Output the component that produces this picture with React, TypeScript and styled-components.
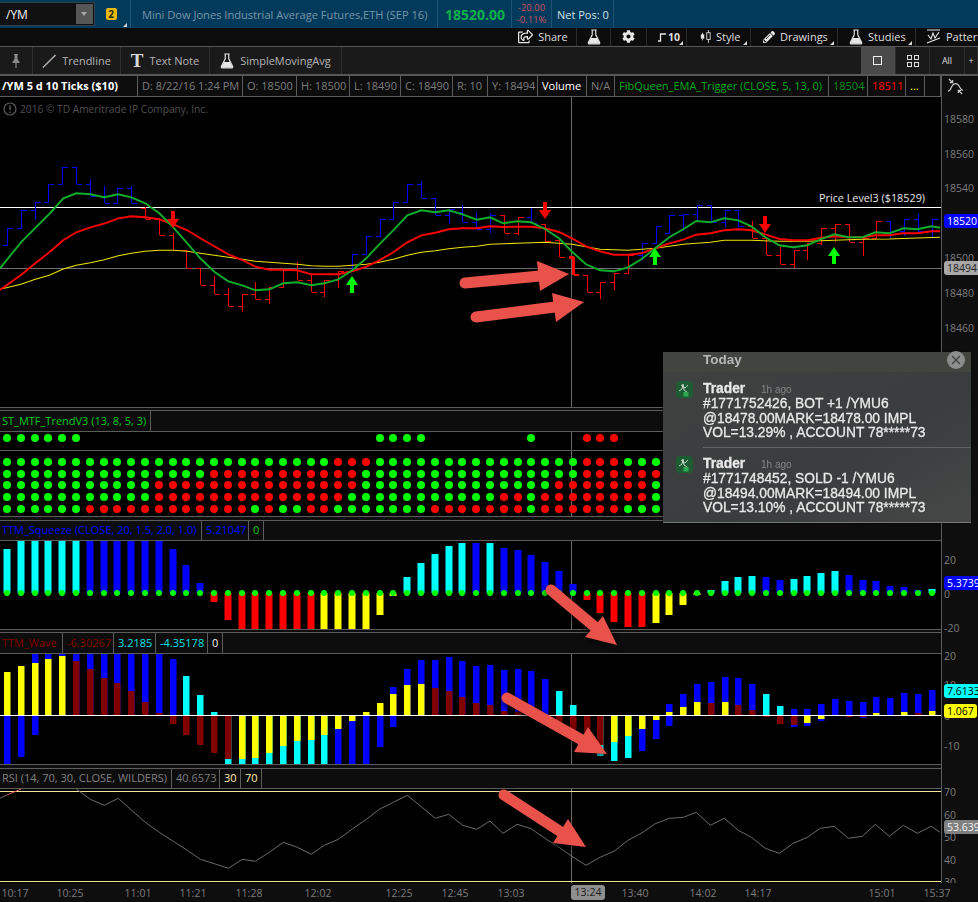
import styled, { createGlobalStyle } from "styled-components"
import { FaCog, FaPencilAlt, FaRegShareSquare } from "react-icons/fa"

const GlobalStyle = createGlobalStyle`
  html, body {
    margin: 0;
    padding: 0;
    background: #0e0e0e;
  }
  * {
    box-sizing: border-box;
  }
`

const BLUE = "#0000ff"
const CYAN = "#00ffff"
const RED = "#ff0000"
const YELLOW = "#ffff00"
const MAROON = "#800000"
const LIME = "#00ff00"

// bar n sits at this x
const barX = (n: number) => Math.round(7 + 13.8 * n)
const CROSS_X = 571

// price data was read off a 3x crop, so y here is (pageY - 125) * 3
const py = (v: number) => 125 + v / 3

type PriceBar = [number, number, number, number, "b" | "r"]
const priceBars: PriceBar[] = [
  [310, 361, 361, 310, "b"], [256, 310, 310, 256, "b"], [232, 285, 256, 232, "b"], [178, 232, 232, 178, "b"],
  [127, 178, 178, 127, "b"], [127, 178, 127, 178, "b"], [162, 214, 178, 214, "b"], [184, 235, 214, 235, "b"],
  [190, 235, 235, 190, "b"], [184, 235, 190, 235, "b"], [245, 283, 250, 283, "r"], [280, 331, 283, 331, "r"],
  [325, 376, 331, 376, "r"], [376, 430, 376, 430, "r"], [430, 481, 430, 481, "r"], [454, 508, 481, 508, "r"],
  [490, 544, 508, 544, "r"], [508, 560, 544, 508, "r"], [472, 523, 508, 523, "r"], [487, 538, 523, 487, "r"],
  [436, 487, 487, 436, "r"], [412, 466, 436, 466, "r"], [451, 502, 466, 502, "r"], [466, 517, 502, 466, "r"],
  [438, 490, 466, 438, "r"], [387, 438, 438, 387, "b"], [334, 387, 387, 334, "b"], [283, 334, 334, 283, "b"],
  [232, 283, 283, 232, "b"], [178, 232, 232, 178, "b"], [169, 220, 178, 220, "b"], [220, 271, 220, 271, "b"],
  [252, 298, 271, 252, "b"], [241, 292, 262, 292, "b"], [262, 313, 292, 313, "b"], [265, 325, 313, 270, "b"],
  [270, 325, 270, 325, "r"], [277, 331, 325, 277, "r"], [250, 295, 277, 295, "b"], [298, 350, 298, 350, "r"],
  [347, 397, 347, 397, "r"], [397, 450, 397, 450, "r"], [450, 502, 450, 502, "r"], [472, 523, 502, 472, "r"],
  [445, 496, 472, 445, "r"], [390, 445, 445, 390, "r"], [355, 406, 390, 355, "b"], [304, 355, 355, 304, "b"],
  [271, 325, 325, 271, "b"], [268, 319, 271, 268, "b"], [241, 292, 268, 241, "b"], [241, 292, 241, 292, "b"],
  [256, 307, 292, 256, "b"], [256, 307, 256, 304, "b"], [289, 340, 304, 340, "r"], [340, 391, 340, 391, "r"],
  [367, 418, 391, 418, "r"], [376, 430, 418, 376, "r"], [355, 406, 376, 355, "r"], [310, 361, 355, 310, "r"],
  [298, 352, 310, 298, "r"], [298, 352, 298, 352, "r"], [340, 393, 352, 340, "r"], [289, 343, 340, 289, "r"],
  [289, 340, 289, 320, "b"], [283, 334, 320, 283, "b"], [268, 322, 283, 318, "b"], [283, 335, 318, 283, "b"],
]

type Pt = [number, number]
// right half of each line was read from the second crop, which starts at 1470
const joinLine = (left: Pt[], right: Pt[]) =>
  [...left, ...right.map(([x, y]) => [x + 1470, y] as Pt)]
    .map(([x, y]) => `${(x / 3).toFixed(1)},${py(y).toFixed(1)}`)
    .join(" ")

const greenLine = joinLine(
  [[0, 430], [63, 352], [148, 267], [190, 220], [229, 205], [271, 208], [313, 217], [355, 208], [394, 217], [436, 235], [478, 265], [520, 307], [562, 355], [601, 400], [643, 440], [685, 469], [727, 481], [766, 496], [808, 493], [850, 475], [892, 472], [934, 481], [973, 475], [1015, 463], [1057, 436], [1099, 400], [1138, 358], [1180, 316], [1222, 271], [1264, 256], [1306, 262], [1346, 256], [1388, 268], [1430, 284]],
  [[0, 277], [39, 295], [81, 289], [123, 292], [165, 312], [207, 340], [246, 380], [288, 418], [330, 436], [372, 439], [414, 427], [454, 403], [496, 370], [538, 337], [580, 313], [619, 288], [661, 292], [703, 280], [745, 286], [784, 304], [826, 337], [868, 361], [910, 367], [952, 361], [991, 343], [1033, 328], [1075, 337], [1117, 337], [1156, 322], [1198, 325], [1240, 310], [1282, 313], [1324, 304], [1350, 308]],
)
const redLine = joinLine(
  [[0, 495], [63, 450], [106, 415], [148, 382], [190, 346], [229, 322], [271, 307], [313, 296], [355, 280], [394, 274], [436, 277], [478, 283], [520, 298], [562, 316], [601, 340], [643, 364], [685, 388], [727, 405], [766, 425], [808, 434], [850, 434], [892, 436], [934, 448], [973, 448], [1015, 448], [1057, 439], [1099, 425], [1138, 406], [1180, 382], [1222, 352], [1264, 331], [1306, 323], [1346, 313], [1388, 310], [1430, 310]],
  [[0, 304], [39, 306], [81, 305], [123, 305], [165, 310], [207, 321], [246, 340], [288, 364], [330, 379], [372, 389], [414, 389], [454, 385], [496, 370], [538, 355], [580, 344], [619, 329], [661, 325], [703, 316], [745, 313], [784, 316], [826, 328], [868, 342], [910, 346], [952, 346], [991, 339], [1033, 334], [1075, 337], [1117, 337], [1156, 331], [1198, 331], [1240, 325], [1282, 325], [1324, 319], [1350, 319]],
)
const yellowLine = joinLine(
  [[0, 493], [63, 478], [106, 463], [148, 451], [190, 432], [229, 421], [271, 413], [313, 404], [355, 392], [394, 385], [436, 379], [478, 376], [520, 376], [562, 379], [601, 385], [643, 391], [685, 397], [727, 403], [766, 409], [808, 412], [850, 415], [892, 418], [934, 422], [973, 424], [1015, 424], [1057, 421], [1099, 418], [1138, 412], [1180, 403], [1222, 391], [1264, 382], [1306, 377], [1346, 371], [1388, 367], [1430, 364]],
  [[0, 358], [81, 355], [165, 352], [246, 358], [330, 373], [414, 376], [496, 370], [580, 358], [661, 352], [703, 346], [784, 346], [868, 349], [952, 349], [1033, 346], [1117, 343], [1198, 342], [1282, 339], [1350, 337]],
)

const signals = [
  { x: 173, y: 211, up: false },
  { x: 545, y: 202, up: false },
  { x: 765, y: 216, up: false },
  { x: 352, y: 276, up: true },
  { x: 655, y: 248, up: true },
  { x: 834, y: 247, up: true },
]

// trend dots: the ranges of bars that are red, per row
const trendTop: [number, number, string][] = [[0, 5, LIME], [27, 30, LIME], [38, 38, LIME], [42, 44, RED]]
const trendRows: { y: number; red: [number, number][] }[] = [
  { y: 462, red: [[24, 26], [42, 44]] },
  { y: 474, red: [[15, 25], [42, 47]] },
  { y: 485, red: [[11, 25], [40, 46]] },
  { y: 497, red: [[11, 24], [36, 37], [39, 46]] },
  { y: 509, red: [[6, 17], [19, 19], [22, 23], [31, 37], [39, 44]] },
]

const squeeze: [number, string][] = [
  [44, CYAN], [60, CYAN], [60, CYAN], [60, CYAN], [60, CYAN], [60, CYAN],
  [60, BLUE], [60, BLUE], [60, BLUE], [60, BLUE], [60, BLUE], [60, BLUE], [44, BLUE], [28, BLUE], [10, BLUE],
  [-9, RED], [-27, RED], [-40, RED], [-40, RED], [-40, RED], [-40, RED], [-40, RED], [-40, RED],
  [-40, YELLOW], [-40, YELLOW], [-40, YELLOW], [-40, YELLOW], [-22, YELLOW], [-3, YELLOW],
  [16, CYAN], [30, CYAN], [39, CYAN], [47, CYAN], [50, CYAN], [50, BLUE], [50, CYAN],
  [45, BLUE], [43, BLUE], [38, BLUE], [31, BLUE], [22, BLUE], [9, BLUE],
  [-7, RED], [-20, RED], [-29, RED], [-34, RED], [-34, RED],
  [-30, YELLOW], [-22, YELLOW], [-12, YELLOW], [-2, YELLOW],
  [3, CYAN], [12, CYAN], [16, CYAN], [17, CYAN], [16, BLUE], [13, BLUE], [14, CYAN], [17, CYAN], [20, CYAN], [22, CYAN],
  [18, BLUE], [13, BLUE], [12, BLUE], [7, BLUE], [6, BLUE], [3, BLUE], [4, CYAN],
]

// wave: each bar is a list of [height, colour], painted in order, tallest first
const B = BLUE, Y = YELLOW, M = MAROON, C = CYAN
const wave: [number, string][][] = [
  [[43, Y], [-49, B]], [[49, Y], [-42, B]], [[62, B], [52, Y], [-20, B]], [[62, B], [56, Y]], [[62, B], [59, Y]],
  [[62, B], [54, M]], [[62, B], [46, M]], [[62, B], [37, M]], [[62, B], [32, M]], [[62, B], [24, M]], [[62, B], [13, M]], [[62, B], [2, M]],
  [[56, B], [-9, M]], [[39, C], [-20, M]], [[20, C], [-30, M]], [[3, C], [-38, M]],
  [[-49, C], [-44, M]], [[-49, C], [-44, Y]], [[-49, C], [-43, Y]], [[-49, C], [-38, Y]], [[-49, C], [-31, Y]], [[-49, C], [-26, Y]], [[-49, C], [-25, Y]], [[-49, C], [-20, Y]],
  [[-49, B], [-14, Y]], [[-49, B], [-6, Y]], [[3, Y], [-49, B]], [[12, Y], [-32, B]], [[28, B], [21, Y], [-12, B]],
  [[46, B], [30, Y]], [[55, B], [31, Y]], [[55, B], [27, M]], [[58, B], [24, M]], [[54, B], [18, M]], [[49, B], [12, M]], [[50, B], [10, M]],
  [[45, B], [4, M]], [[46, B], [3, M]], [[44, B]], [[36, B]], [[24, C], [-7, M]], [[10, C], [-18, M]], [[-25, M]],
  [[-41, C], [-30, M]], [[-46, C], [-27, Y]], [[-43, C], [-21, Y]], [[-36, B], [-14, Y]], [[-24, B], [-5, Y]],
  [[11, B], [3, Y], [-11, B]], [[21, B], [8, Y]], [[31, B], [13, Y]], [[33, B], [12, M]], [[38, B], [13, Y]], [[37, B], [10, M]], [[31, B], [5, M]],
  [[21, C], [-2, M]], [[9, C], [-9, M]], [[6, B], [-12, B], [-10, M]], [[6, B], [-11, B], [-8, Y]], [[11, B], [-6, B], [-4, Y]],
  [[16, B]], [[14, B], [-2, M]], [[13, B], [-3, B], [-2, M]], [[18, B], [2, Y]], [[17, B]], [[22, B], [3, Y]], [[21, B], [2, M]], [[25, B], [4, Y]],
]

const rsiPoints = (pts: Pt[]) => pts.map(([x, y]) => `${(x / 3).toFixed(1)},${(765 + y / 3).toFixed(1)}`).join(" ")
const rsiLine = rsiPoints([
  [229, 72], [271, 103], [313, 121], [355, 100], [394, 135], [436, 172], [478, 202], [520, 229], [562, 256], [601, 283], [643, 296], [685, 310], [727, 283], [766, 289], [808, 262], [850, 232], [892, 247], [934, 268], [973, 241], [1015, 223], [1057, 192], [1099, 163], [1138, 133], [1180, 112], [1222, 91], [1264, 125], [1306, 160], [1346, 148], [1388, 181], [1430, 193], [1470, 168],
  [1509, 205], [1551, 178], [1593, 191], [1635, 220], [1677, 247], [1716, 274], [1758, 301], [1800, 277], [1842, 259], [1884, 226], [1924, 205], [1966, 176], [2008, 160], [2050, 157], [2089, 142], [2131, 181], [2173, 160], [2215, 196], [2254, 217], [2296, 250], [2338, 265], [2380, 235], [2422, 217], [2461, 190], [2503, 184], [2545, 220], [2587, 214], [2626, 178], [2668, 214], [2710, 181], [2752, 205], [2794, 184], [2820, 202],
])

const callouts = [
  { tail: [465, 283], neck: [540, 276], head: "537,261 569,274 540,291" },
  { tail: [476, 317], neck: [555, 307], head: "552,293 584,302 556,322" },
  { tail: [551, 590], neck: [595, 627], head: "603,616 617,645 585,637" },
  { tail: [507, 698], neck: [582, 740], head: "588,727 607,754 574,752" },
  { tail: [504, 795], neck: [561, 832], head: "568,819 586,847 553,843" },
]

const timeLabels: [string, number][] = [
  ["10:17", 15], ["10:25", 70], ["11:01", 138], ["11:21", 193], ["11:28", 249], ["12:02", 318], ["12:25", 399],
  ["12:45", 455], ["13:03", 511], ["13:40", 635], ["14:02", 703], ["14:17", 758], ["15:01", 882], ["15:37", 937],
]

const axisTicks: [string, number][] = [
  ["18580", 119], ["18560", 154], ["18540", 188], ["18500", 258], ["18480", 293], ["18460", 328],
  ["20", 560], ["0", 594], ["-20", 628],
  ["20", 656], ["10", 685], ["0", 716], ["-10", 746],
  ["70", 792], ["60", 815], ["50", 837], ["40", 860], ["30", 882],
]

const axisBadges: { text: string; y: number; bg: string; fg: string }[] = [
  { text: "18520", y: 221, bg: BLUE, fg: "#ffffff" },
  { text: "18494", y: 268, bg: "#a8a8a8", fg: "#222222" },
  { text: "5.3739", y: 583, bg: BLUE, fg: "#ffffff" },
  { text: "7.6133", y: 691, bg: CYAN, fg: "#000000" },
  { text: "1.067", y: 711, bg: YELLOW, fg: "#000000" },
  { text: "53.639", y: 827, bg: "#808080", fg: "#f2f2f2" },
]

const Flask = ({ size = 16 }: { size?: number }) => (
  <svg width={size} height={size + 2} viewBox="0 0 16 18">
    <path d="M5 1h6M6 1.500v5L1.600 15c-.5 1 .1 2 1.100 2h10.600c1 0 1.600-1 1.100-2L10 6.500v-5" fill="none" stroke="#e6e6e6" strokeWidth="1.300" />
    <path d="M4.600 10h6.800l2.700 5.400c.3.700 0 1.200-.8 1.200H2.700c-.8 0-1.100-.5-.8-1.200z" fill="#e6e6e6" />
  </svg>
)

const Corner = styled.span`
  position: absolute;
  right: 3px;
  bottom: 1px;
  width: 0;
  height: 0;
  border-style: solid;
  border-width: 0 0 4px 4px;
  border-color: transparent transparent #d8d8d8 transparent;
`

export default function App() {
  return (
    <>
      <GlobalStyle />
      <Page>
        <TopBar>
          <SymbolBox>
            /YM
            <DropButton />
          </SymbolBox>
          <LinkCell>
            <LinkBadge>2</LinkBadge>
            <Corner />
          </LinkCell>
          <TitleCell>Mini Dow Jones Industrial Average Futures,ETH (SEP 16)</TitleCell>
          <LastCell>18520.00</LastCell>
          <ChangeCell>
            <span>-20.00</span>
            <span>-0.11%</span>
          </ChangeCell>
          <NetCell>Net Pos: 0</NetCell>
        </TopBar>

        <ActionBar>
          <ActionItem $w={67}>
            <FaRegShareSquare size={15} />
            Share
          </ActionItem>
          <ActionItem $w={34}>
            <Flask size={14} />
          </ActionItem>
          <ActionItem $w={36}>
            <FaCog size={13} />
          </ActionItem>
          <ActionItem $w={40} $pad={11}>
            <svg width="8" height="10" viewBox="0 0 8 10">
              <path d="M0 9h2.500V2H8" fill="none" stroke="#e6e6e6" strokeWidth="1.300" />
            </svg>
            <b>10</b>
            <Corner />
          </ActionItem>
          <ActionItem $w={64} $pad={13}>
            <svg width="11" height="15" viewBox="0 0 13 15">
              <path d="M3 3v9M10 0v15" stroke="#e6e6e6" strokeWidth="1" />
              <rect x="1" y="5" width="4" height="5" fill="#e6e6e6" />
              <rect x="8" y="3" width="4" height="8" fill="#111" stroke="#e6e6e6" />
            </svg>
            Style
            <Corner />
          </ActionItem>
          <ActionItem $w={87} $pad={12}>
            <FaPencilAlt size={12} />
            Drawings
            <Corner />
          </ActionItem>
          <ActionItem $w={78} $pad={11}>
            <Flask size={14} />
            Studies
            <Corner />
          </ActionItem>
          <ActionItem $w={80} $pad={10}>
            <svg width="15" height="16" viewBox="0 0 15 16">
              <path d="M1 1h13M2 6l3 4 2-6 2 5 4-6M1 14l13-5" fill="none" stroke="#e6e6e6" strokeWidth="1.100" />
            </svg>
            Patterns
          </ActionItem>
        </ActionBar>

        <Toolbar>
          <ToolItem $w={33}>
            <svg width="8" height="14" viewBox="0 0 8 14">
              <path d="M2 0h4v1l-.6.6V5L7.500 8v1H4.600v5H3.400V9H.5V8l2.100-3V1.600L2 1z" fill="#8a8a8a" />
            </svg>
          </ToolItem>
          <ToolItem $w={88}>
            <svg width="14" height="14" viewBox="0 0 15 15">
              <path d="M1 14.500L14.500 1" stroke="#b8b8b8" strokeWidth="1.400" />
            </svg>
            Trendline
          </ToolItem>
          <ToolItem $w={89}>
            <SerifT>T</SerifT>
            Text Note
          </ToolItem>
          <ToolItem $w={132}>
            <Flask size={14} />
            SimpleMovingAvg
          </ToolItem>
          <ToolSpacer />
          <ViewButton $w={35} $active>
            <svg width="10" height="10" viewBox="0 0 10 10">
              <rect x=".5" y=".5" width="8" height="8" fill="none" stroke="#f0f0f0" />
            </svg>
          </ViewButton>
          <ViewButton $w={34}>
            <svg width="12" height="12" viewBox="0 0 12 12" fill="none" stroke="#dcdcdc">
              <rect x=".5" y=".5" width="4" height="4" />
              <rect x="7.500" y=".5" width="4" height="4" />
              <rect x=".5" y="7.500" width="4" height="4" />
              <rect x="7.500" y="7.500" width="4" height="4" />
            </svg>
          </ViewButton>
          <ViewButton $w={35}>All</ViewButton>
          <ViewButton $w={13}>+</ViewButton>
        </Toolbar>

        <Workspace>
          <Charts>
            <Legend>
              <LegendCell $w={138} $color="#ffffff" $bold>/YM 5 d 10 Ticks ($10)</LegendCell>
              <LegendCell $w={105}>D: 8/22/16 1:24 PM</LegendCell>
              <LegendCell $w={54}>O: 18500</LegendCell>
              <LegendCell $w={53}>H: 18500</LegendCell>
              <LegendCell $w={51}>L: 18490</LegendCell>
              <LegendCell $w={52}>C: 18490</LegendCell>
              <LegendCell $w={35}>R: 10</LegendCell>
              <LegendCell $w={50}>Y: 18494</LegendCell>
              <LegendCell $w={49} $color="#ffffff">Volume</LegendCell>
              <LegendCell $w={28}>N/A</LegendCell>
              <LegendCell $w={214} $color="#00a81c">FibQueen_EMA_Trigger (CLOSE, 5, 13, 0)</LegendCell>
              <LegendCell $w={39} $color="#008f18">18504</LegendCell>
              <LegendCell $w={38} $color={RED}>18511</LegendCell>
              <LegendCell $w={19} $color={YELLOW}>...</LegendCell>
              <LegendCell $w={16} />
            </Legend>
            <Plot $h={310}>
              <Copyright>
                <svg width="14" height="14" viewBox="0 0 14 14">
                  <circle cx="7" cy="7" r="6" fill="none" stroke="#5a5a5a" strokeWidth="1.200" />
                  <path d="M7 3.500v4.500M7 9.500v1.500" stroke="#5a5a5a" strokeWidth="1.500" />
                </svg>
                2016 © TD Ameritrade IP Company, Inc.
              </Copyright>
              <PriceLevel>Price Level3 ($18529)</PriceLevel>
              <PlotSvg $top={97} $h={310}>
                <Crosshair top={97} h={310} />
                <line x1="0" x2="941" y1="207.500" y2="207.500" stroke="#ffffff" />
                <line x1="0" x2="941" y1="268.500" y2="268.500" stroke="#707070" />
                {priceBars.map(([top, bot, open, close, c], n) => {
                  const x = barX(n) + 0.5
                  return (
                    <path
                      key={n}
                      d={`M${x} ${py(top)}V${py(bot)}M${x - 5} ${py(open)}H${x}M${x} ${py(close)}H${x + 5}`}
                      fill="none"
                      stroke={c === "b" ? BLUE : RED}
                      strokeWidth={n === 41 ? 2.5 : 1}
                      shapeRendering="crispEdges"
                    />
                  )
                })}
                <polyline points={yellowLine} fill="none" stroke="#efe300" strokeWidth="1.100" />
                <polyline points={redLine} fill="none" stroke={RED} strokeWidth="1.900" />
                <polyline points={greenLine} fill="none" stroke="#0fae2d" strokeWidth="1.900" />
                {signals.map(({ x, y, up }) => (
                  <path
                    key={x}
                    d={
                      up
                        ? `M${x} ${y}l6 9h-4v8h-4v-8h-4z`
                        : `M${x - 2} ${y}h4v8h4l-6 9l-6-9h4z`
                    }
                    fill={up ? LIME : RED}
                  />
                ))}
              </PlotSvg>
            </Plot>

            <PaneGap $h={4} />
            <Legend>
              <LegendCell $w={151} $color="#00c81e">ST_MTF_TrendV3 (13, 8, 5, 3)</LegendCell>
            </Legend>
            <Plot $h={84}>
              <PlotSvg $top={432} $h={84}>
                <Crosshair top={432} h={84} />
                <line x1="0" x2="941" y1="450.500" y2="450.500" stroke="#5e5e5e" />
                {trendTop.map(([from, to, color]) =>
                  Array.from({ length: to - from + 1 }, (_, i) => (
                    <circle key={from + i} cx={barX(from + i)} cy={438} r={4} fill={color} />
                  )),
                )}
                {trendRows.map(({ y, red }) =>
                  Array.from({ length: 48 }, (_, n) => (
                    <circle
                      key={`${y}-${n}`}
                      cx={barX(n)}
                      cy={y}
                      r={4}
                      fill={red.some(([a, b]) => n >= a && n <= b) ? RED : LIME}
                    />
                  )),
                )}
              </PlotSvg>
            </Plot>

            <PaneGap $h={5} />
            <Legend $h={20}>
              <LegendCell $w={202} $color={BLUE}>TTM_Squeeze (CLOSE, 20, 1.5, 2.0, 1.0)</LegendCell>
              <LegendCell $w={47} $color={BLUE}>5.21047</LegendCell>
              <LegendCell $w={15} $color="#00c81e">0</LegendCell>
            </Legend>
            <Plot $h={88}>
              <PlotSvg $top={541} $h={88}>
                <Crosshair top={541} h={88} />
                {squeeze.map(([h, color], n) => (
                  <rect
                    key={n}
                    x={barX(n) - 3.5}
                    y={h > 0 ? 593 - h : 593}
                    width={7}
                    height={Math.abs(h)}
                    fill={color}
                  />
                ))}
                {squeeze.map((_, n) => (
                  <circle key={n} cx={barX(n)} cy={593} r={3} fill={LIME} />
                ))}
              </PlotSvg>
            </Plot>

            <PaneGap $h={4} />
            <Legend>
              <LegendCell $w={63} $color={MAROON}>TTM_Wave</LegendCell>
              <LegendCell $w={51} $color={MAROON}>-6.30267</LegendCell>
              <LegendCell $w={42} $color="#00e0e0">3.2185</LegendCell>
              <LegendCell $w={52} $color="#00e0e0">-4.35178</LegendCell>
              <LegendCell $w={15} $color="#f0f0f0">0</LegendCell>
            </Legend>
            <Plot $h={110}>
              <PlotSvg $top={654} $h={110}>
                <Crosshair top={654} h={110} />
                {wave.map((parts, n) =>
                  parts.map(([h, color], i) => (
                    <rect
                      key={`${n}-${i}`}
                      x={barX(n) - 3}
                      y={h > 0 ? 715 - h : 715}
                      width={6.5}
                      height={Math.abs(h)}
                      fill={color}
                    />
                  )),
                )}
                <line x1="0" x2="941" y1="715.500" y2="715.500" stroke="#ffffff" />
              </PlotSvg>
            </Plot>

            <PaneGap $h={5} />
            <Legend $h={20}>
              <LegendCell $w={172} $color="#808080">RSI (14, 70, 30, CLOSE, WILDERS)</LegendCell>
              <LegendCell $w={48}>40.6573</LegendCell>
              <LegendCell $w={21} $color="#ffe9a8">30</LegendCell>
              <LegendCell $w={21} $color="#ffe9a8">70</LegendCell>
            </Legend>
            <Plot $h={94}>
              <PlotSvg $top={789} $h={94}>
                <Crosshair top={789} h={94} />
                <line x1="0" x2="941" y1="791.500" y2="791.500" stroke="#f4e39a" />
                <line x1="0" x2="941" y1="881.500" y2="881.500" stroke="#f4e39a" />
                <polyline points={rsiPoints([[0, 100], [21, 90]])} fill="none" stroke="#6c6c6c" />
                <polyline points={rsiPoints([[21, 90], [63, 72]])} fill="none" stroke="#e0605a" />
                <polyline points={rsiLine} fill="none" stroke="#6c6c6c" />
              </PlotSvg>
            </Plot>
          </Charts>

          <Axis>
            <AxisIcon>
              <svg width="17" height="17" viewBox="0 0 18 18" fill="none" stroke="#c8c8c8" strokeWidth="1.300">
                <path d="M1 14c4 0 3-8 8-8s4 7 8 7" />
                <path d="M2 1l4 4M6 2v3H3M16 17l-4-4M12 16v-3h3" />
              </svg>
            </AxisIcon>
            {axisTicks.map(([text, y]) => (
              <AxisTick key={`${text}-${y}`} $y={y}>{text}</AxisTick>
            ))}
            {axisBadges.map(b => (
              <AxisBadge key={b.text} $y={b.y} $bg={b.bg} $fg={b.fg}>{b.text}</AxisBadge>
            ))}
          </Axis>
        </Workspace>

        <TimeAxis>
          {timeLabels.map(([text, x]) => (
            <TimeLabel key={text} $x={x}>{text}</TimeLabel>
          ))}
          <TimeCursor>13:24</TimeCursor>
        </TimeAxis>

        <Callouts viewBox="0 0 978 902">
          {callouts.map(({ tail, neck, head }) => (
            <g key={head}>
              <line x1={tail[0]} y1={tail[1]} x2={neck[0]} y2={neck[1]} stroke="#e8524b" strokeWidth="11" strokeLinecap="round" />
              <polygon points={head} fill="#e8524b" />
            </g>
          ))}
        </Callouts>

        <Notice>
          <NoticeHead>
            Today
            <NoticeClose>
              <svg width="10" height="10" viewBox="0 0 10 10">
                <path d="M1 1l8 8M9 1l-8 8" stroke="#3c3e3e" strokeWidth="1.200" />
              </svg>
            </NoticeClose>
          </NoticeHead>
          <NoticeItem>
            <AppLogo />
            <NoticeText>
              <NoticeTitle>Trader <small>1h ago</small></NoticeTitle>
              #1771752426, BOT +1 /YMU6<br />
              @18478.00MARK=18478.00 IMPL<br />
              VOL=13.29% , ACCOUNT 78*****73
            </NoticeText>
          </NoticeItem>
          <NoticeItem $divided>
            <AppLogo />
            <NoticeText>
              <NoticeTitle>Trader <small>1h ago</small></NoticeTitle>
              #1771748452, SOLD -1 /YMU6<br />
              @18494.00MARK=18494.00 IMPL<br />
              VOL=13.10% , ACCOUNT 78*****73
            </NoticeText>
          </NoticeItem>
        </Notice>
      </Page>
    </>
  )
}

const Crosshair = ({ top, h }: { top: number; h: number }) => (
  <line x1={CROSS_X + 0.5} x2={CROSS_X + 0.5} y1={top} y2={top + h} stroke="#6a6a6a" />
)

const AppLogo = () => (
  <svg width="17" height="17" viewBox="0 0 17 17">
    <rect width="17" height="17" rx="4" fill="#1d5c33" />
    <path d="M3 10l3-2 1-5 1 6 3 2M5 4l4 3 3-3" fill="none" stroke="#cfe0d4" strokeWidth=".9" />
    <rect x="7.500" y="11" width="5" height="4.500" fill="#2fa84f" />
  </svg>
)

const Page = styled.div`
  position: relative;
  width: 978px;
  height: 902px;
  overflow: hidden;
  background: #0e0e0e;
  font-family: "Open Sans", "Liberation Sans", sans-serif;
  font-size: 11px;
  color: #8a8a8a;
`

const TopBar = styled.div`
  display: flex;
  align-items: center;
  height: 28px;
  background: #023a5c;
`

const SymbolBox = styled.div`
  position: relative;
  display: flex;
  align-items: center;
  width: 95px;
  height: 24px;
  padding-left: 6px;
  background: #111111;
  border: 1px solid #33424c;
  border-left: 0;
  color: #f2f2f2;
  font-size: 12px;
`

const DropButton = styled.span`
  position: absolute;
  top: 1px;
  right: 1px;
  width: 17px;
  height: 20px;
  background: #565656;

  &::after {
    content: "";
    position: absolute;
    top: 8px;
    left: 5px;
    border-style: solid;
    border-width: 4px 3.5px 0 3.5px;
    border-color: #a8a8a8 transparent transparent transparent;
  }
`

const LinkCell = styled.div`
  position: relative;
  display: flex;
  align-items: center;
  justify-content: center;
  width: 36px;
  height: 100%;
  padding-right: 3px;
  border-right: 1px solid #1c5273;
`

const LinkBadge = styled.span`
  width: 11px;
  height: 12px;
  border-radius: 2px;
  background: #e8b90c;
  color: #2a2a10;
  font-size: 10px;
  font-weight: 700;
  line-height: 12px;
  text-align: center;
`

const TitleCell = styled.div`
  display: flex;
  align-items: center;
  width: 307px;
  height: 100%;
  padding-left: 11px;
  border-right: 1px solid #1c5273;
  color: #7895a8;
  font-size: 11.1px;
  white-space: nowrap;
`

const LastCell = styled.div`
  display: flex;
  align-items: center;
  width: 74px;
  height: 100%;
  padding-left: 7px;
  border-right: 1px solid #1c5273;
  color: #0db04a;
  font-size: 14px;
  font-weight: 700;
`

const ChangeCell = styled.div`
  display: flex;
  flex-direction: column;
  align-items: center;
  width: 40px;
  height: 100%;
  padding-top: 2px;
  border-right: 1px solid #1c5273;
  color: #c8505a;
  font-size: 9.5px;
  line-height: 12px;
`

const NetCell = styled.div`
  display: flex;
  align-items: center;
  width: 62px;
  height: 100%;
  padding-left: 5px;
  border-right: 1px solid #1c5273;
  color: #d6e0e6;
  font-size: 11px;
`

const ActionBar = styled.div`
  display: flex;
  height: 18px;
  padding-left: 510px;
  background: #0c0c0c;
`

const ActionItem = styled.div<{ $w: number; $pad?: number }>`
  position: relative;
  flex: 0 0 ${p => p.$w}px;
  display: flex;
  align-items: center;
  justify-content: ${p => (p.$pad ? "flex-start" : "center")};
  gap: 5px;
  height: 100%;
  padding-bottom: 1px;
  padding-left: ${p => p.$pad ?? 0}px;
  border-right: 1px solid #2b2b2b;
  color: #dedede;
  font-size: 11px;
  white-space: nowrap;

  svg {
    flex: none;
    color: #e6e6e6;
  }
  b {
    margin-left: -3px;
    font-size: 10.5px;
  }
`

const Toolbar = styled.div`
  display: flex;
  height: 30px;
  background: #1a1a1a;
  border-top: 1px solid #585858;
  border-bottom: 2px solid #585858;
`

const ToolItem = styled.div<{ $w: number }>`
  display: flex;
  align-items: center;
  justify-content: center;
  gap: 6px;
  width: ${p => p.$w}px;
  border-right: 1px solid #2e2e2e;
  color: #b4b4b4;
  font-size: 11px;
`

const SerifT = styled.span`
  color: #d8d8d8;
  font-family: "Liberation Serif", serif;
  font-size: 19px;
  font-weight: 700;
  line-height: 1;
`

const ToolSpacer = styled.div`
  flex: 1;
`

const ViewButton = styled.div<{ $w: number; $active?: boolean }>`
  display: flex;
  flex: 0 0 ${p => p.$w}px;
  align-items: center;
  justify-content: center;
  background: ${p => (p.$active ? "#4a4a4a" : "transparent")};
  border-right: 1px solid #2e2e2e;
  color: #dcdcdc;
  font-size: 9px;
`

const Workspace = styled.div`
  display: grid;
  grid-template-columns: 941px 37px;
  height: 807px;
`

const Charts = styled.div`
  display: flex;
  flex-direction: column;
`

const Legend = styled.div<{ $h?: number }>`
  display: flex;
  height: ${p => p.$h ?? 21}px;
  border-bottom: 1px solid #5c5c5c;
  background: #0d0d0d;
`

const LegendCell = styled.div<{ $w: number; $color?: string; $bold?: boolean }>`
  flex: 0 0 ${p => p.$w}px;
  display: flex;
  align-items: center;
  padding: 0 0 2px 4px;
  border-right: 1px solid #5c5c5c;
  color: ${p => p.$color ?? "#7c7c7c"};
  font-size: 11px;
  font-weight: ${p => (p.$bold ? 700 : 400)};
  white-space: nowrap;
  overflow: hidden;

  &:first-child {
    padding-left: 2px;
  }
`

const PaneGap = styled.div<{ $h: number }>`
  height: ${p => p.$h}px;
  border-top: 1px solid #5c5c5c;
  border-bottom: 1px solid #5c5c5c;
  background: #0e0e0e;
`

const Plot = styled.div<{ $h: number }>`
  position: relative;
  height: ${p => p.$h}px;
  background: #000000;
  overflow: hidden;
`

// viewBox keeps the page y, so the data above can stay in page coordinates
const PlotSvg = styled.svg.attrs<{ $top: number; $h: number }>(p => ({
  viewBox: `0 ${p.$top} 941 ${p.$h}`,
}))<{ $top: number; $h: number }>`
  display: block;
  width: 941px;
  height: ${p => p.$h}px;
`

const Copyright = styled.div`
  position: absolute;
  top: 5px;
  left: 3px;
  display: flex;
  align-items: center;
  gap: 3px;
  color: #505050;
  font-size: 10.2px;
`

const PriceLevel = styled.div`
  position: absolute;
  top: 93px;
  right: 16px;
  color: #e6e6e6;
  font-size: 10.8px;
`

const Axis = styled.div`
  position: relative;
  border-left: 1px solid #5c5c5c;
  background: #0e0e0e;
  overflow: hidden;
`

const AxisIcon = styled.div`
  padding: 2px 0 0 5px;
`

const AxisTick = styled.span<{ $y: number }>`
  position: absolute;
  top: ${p => p.$y - 76}px;
  left: 2px;
  transform: translateY(-50%);
  color: #7c7c7c;
  font-size: 10.5px;
`

const AxisBadge = styled.span<{ $y: number; $bg: string; $fg: string }>`
  position: absolute;
  top: ${p => p.$y - 76}px;
  left: 2px;
  transform: translateY(-50%);
  height: 14px;
  padding: 0 3px;
  border-radius: 3px;
  background: ${p => p.$bg};
  color: ${p => p.$fg};
  font-size: 10.5px;
  line-height: 14px;
  white-space: nowrap;
`

const TimeAxis = styled.div`
  position: relative;
  height: 19px;
  background: #0e0e0e;
`

const TimeLabel = styled.span<{ $x: number }>`
  position: absolute;
  top: 3px;
  left: ${p => p.$x}px;
  transform: translateX(-50%);
  color: #7c7c7c;
  font-size: 10.5px;
`

const TimeCursor = styled.span`
  position: absolute;
  top: 2px;
  left: 571px;
  width: 34px;
  height: 15px;
  border-radius: 3px;
  background: #8e8e8e;
  color: #1a1a1a;
  font-size: 10.5px;
  line-height: 15px;
  text-align: center;
`

const Callouts = styled.svg`
  position: absolute;
  top: 0;
  left: 0;
  width: 978px;
  height: 902px;
  filter: drop-shadow(0 2px 3px rgba(0, 0, 0, 0.8));
  pointer-events: none;
`

const Notice = styled.div`
  position: absolute;
  top: 352px;
  left: 663px;
  width: 308px;
  height: 171px;
  background: linear-gradient(150deg, #3f4241, #3a3d3d 60%, #454847);
  border-bottom: 1px solid #777;
  color: #e8e8e8;
  font-family: "Liberation Sans", sans-serif;
  font-size: 13.8px;
  line-height: 14.3px;
  box-shadow: 0 0 2px rgba(0, 0, 0, 0.6);
`

const NoticeHead = styled.div`
  position: relative;
  height: 20px;
  padding-left: 40px;
  background: #424440;
  color: #b8b8b8;
  font-size: 13.5px;
  font-weight: 700;
  line-height: 16px;
  filter: blur(0.3px);
`

const NoticeClose = styled.span`
  position: absolute;
  top: -1px;
  right: 6px;
  display: flex;
  align-items: center;
  justify-content: center;
  width: 18px;
  height: 18px;
  border-radius: 50%;
  background: #8a8f8d;
`

const NoticeItem = styled.div<{ $divided?: boolean }>`
  position: relative;
  display: flex;
  gap: 10px;
  height: 75px;
  padding: 10px 0 0 13px;

  ${p =>
    p.$divided &&
    `&::before {
      content: "";
      position: absolute;
      top: 0;
      left: 40px;
      right: 0;
      height: 1px;
      background: #5f6261;
    }`}

  svg {
    flex: none;
    margin-top: -1px;
  }
`

const NoticeText = styled.div`
  white-space: nowrap;
  -webkit-text-stroke: 0.3px #e8e8e8;
  filter: blur(0.3px);
`

const NoticeTitle = styled.div`
  font-weight: 700;

  small {
    margin-left: 12px;
    color: #858787;
    font-size: 10px;
    font-weight: 400;
    -webkit-text-stroke: 0;
  }
`
